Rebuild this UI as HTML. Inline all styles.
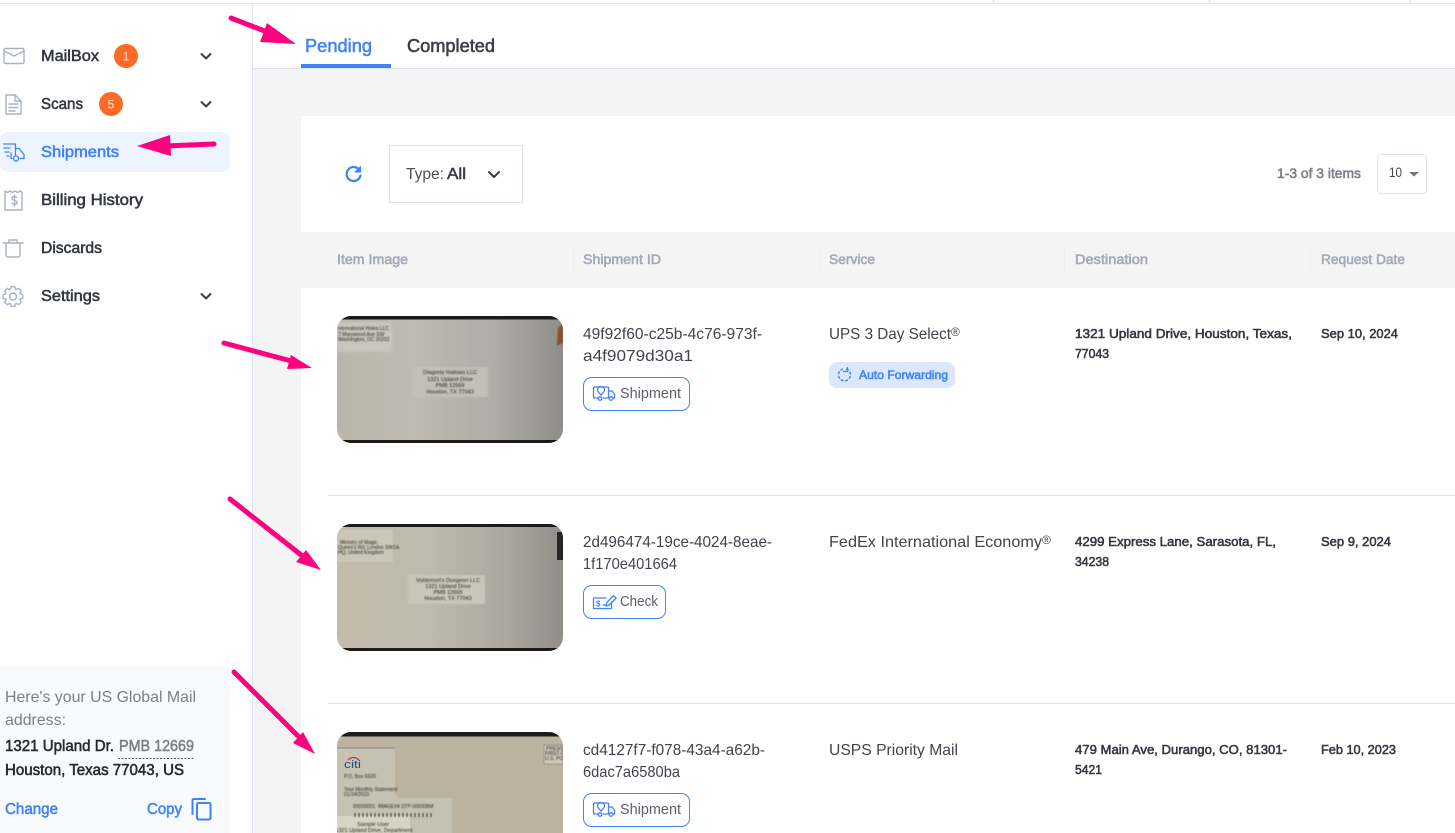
<!DOCTYPE html>
<html lang="en">
<head>
<meta charset="utf-8">
<title>Shipments</title>
<style>
html,body{margin:0;padding:0;width:1455px;height:833px;overflow:hidden;background:#fff}
svg{display:block;position:absolute;left:0;top:0}
text{font-family:"Liberation Sans",sans-serif;white-space:pre}
.m{stroke-width:.55px;paint-order:stroke}
.nav{font-size:16px;fill:#33373f;stroke:#33373f}
.h{font-size:14px;fill:#a2a8b6;stroke:#a2a8b6}
.b{font-size:16px;fill:#40444c;letter-spacing:0}
.d{font-size:13px;fill:#33373f;stroke:#33373f}
.l{font-size:14.5px;fill:#5b5f66}
.i{fill:none;stroke:#a9b2c0;stroke-width:1.4;stroke-linecap:round;stroke-linejoin:round}
.bl{fill:none;stroke:#3f83f8;stroke-width:1.3;stroke-linecap:round;stroke-linejoin:round}
.c{fill:none;stroke:#3a3d44;stroke-width:2;stroke-linecap:round;stroke-linejoin:round}
.e{font-size:5.5px;fill:#2c2a26;text-anchor:middle;filter:url(#bl)}
.e2{font-size:5px;fill:#2c2a26;filter:url(#bl)}
.ar{fill:none;stroke:#ff0080;stroke-width:5;stroke-linecap:round}
</style>
</head>
<body>
<svg width="1455" height="833" viewBox="0 0 1455 833" xmlns="http://www.w3.org/2000/svg">
<defs>
<filter id="bl" x="-10%" y="-30%" width="120%" height="160%"><feGaussianBlur stdDeviation=".45"/></filter>
<filter id="soft" x="-5%" y="-5%" width="110%" height="110%"><feGaussianBlur stdDeviation=".8"/></filter>
<linearGradient id="g1" x1="0" x2="1" y1="0" y2="0"><stop offset="0" stop-color="#b9b6ab"/><stop offset=".35" stop-color="#bdbab1"/><stop offset=".7" stop-color="#aeaca5"/><stop offset="1" stop-color="#8e8d88"/></linearGradient>
<linearGradient id="g2" x1="0" x2="1" y1="0" y2="0"><stop offset="0" stop-color="#c2bbaa"/><stop offset=".4" stop-color="#bfbaae"/><stop offset=".75" stop-color="#aaa79f"/><stop offset="1" stop-color="#908e87"/></linearGradient>
<clipPath id="c1"><rect x="337" y="316" width="226" height="127" rx="14"/></clipPath>
<clipPath id="c2"><rect x="337" y="524" width="226" height="127" rx="14"/></clipPath>
<clipPath id="c3"><rect x="337" y="732" width="226" height="127" rx="14"/></clipPath>
</defs>

<!-- page background -->
<rect width="1455" height="833" fill="#fff"/>
<rect x="253" y="69" width="1202" height="764" fill="#f4f4f4"/>
<rect x="253" y="68" width="1202" height="1" fill="#dde3ef"/>
<rect x="0" y="3" width="1455" height="1" fill="#dfe3ec"/>
<rect x="993" y="0" width="1" height="3" fill="#dfe3ec"/>
<rect x="1209" y="0" width="1" height="3" fill="#dfe3ec"/>
<rect x="1410" y="0" width="1" height="3" fill="#dfe3ec"/>
<rect x="252" y="4" width="1" height="829" fill="#dde3ef"/>

<!-- tabs -->
<text x="305" y="52" font-size="18" fill="#3f83f8" stroke="#3f83f8" class="m" textLength="67" lengthAdjust="spacingAndGlyphs">Pending</text>
<text x="407" y="52" font-size="18" fill="#3a3d44" stroke="#3a3d44" class="m" textLength="88" lengthAdjust="spacingAndGlyphs">Completed</text>
<rect x="301" y="64" width="90" height="4" fill="#3f83f8"/>

<!-- sidebar -->
<rect x="0" y="132" width="230" height="40" rx="8" fill="#eef4ff"/>
<g class="i">
<path d="M4 50.500q0-2 2-2h16q2 0 2 2v11q0 2-2 2H6q-2 0-2-2z"/>
<path d="M4 51l10 5 10-5"/>
<path d="M6 95h9l6 6v13H6z"/>
<path d="M15 95v6h6M9 104h9M9 107.500h9M9 111h6"/>
<path d="M5 191l2.500 1.500 2.500-1.500 2.500 1.500 2.500-1.500 2.500 1.500 2.500-1.500 2 1V210H5z"/>
<path d="M16.500 197.500c-1-1.300-4.500-1.300-4.500 1 0 2.500 5 1.500 5 4 0 2.200-3.700 2.200-5 .8M14.500 195v11"/>
<path d="M3 243h20M9 243v-3h8v3M6 243v12q0 2 2 2h10q2 0 2-2v-12"/>
<path transform="translate(13 296.500)" d="M-2.600-7.140L-1.740-9.850 1.740-9.850 2.600-7.140 3.210-6.890 5.740-8.190 8.190-5.740 6.890-3.210 7.140-2.600 9.850-1.740 9.850 1.740 7.140 2.600 6.890 3.210 8.190 5.740 5.740 8.190 3.210 6.890 2.600 7.140 1.740 9.850-1.740 9.850-2.600 7.140-3.210 6.890-5.740 8.190-8.190 5.740-6.890 3.210-7.140 2.600-9.850 1.740-9.850-1.740-7.140-2.600-6.890-3.210-8.190-5.740-5.740-8.190-3.210-6.890z"/>
<circle cx="13" cy="296.500" r="3.500"/>
</g>
<g class="bl">
<path d="M3.500 144H15.500V155.500M15.500 148.500h3.500l5 6v4h-4M12 158.500h-1V153"/>
<path d="M4 148h6M5 152h4M7 156h2"/>
<circle cx="16" cy="158.500" r="2.500"/>
</g>
<text x="41" y="61" class="nav m" textLength="58" lengthAdjust="spacingAndGlyphs">MailBox</text>
<circle cx="126" cy="56" r="12" fill="#fa6b25"/>
<text x="126" y="60.500" font-size="12" fill="#ffe9dc" text-anchor="middle">1</text>
<text x="41" y="109" class="nav m" textLength="42" lengthAdjust="spacingAndGlyphs">Scans</text>
<circle cx="111" cy="104" r="12" fill="#fa6b25"/>
<text x="111" y="108.500" font-size="12" fill="#ffe9dc" text-anchor="middle">5</text>
<text x="41" y="157" font-size="16" fill="#3f83f8" stroke="#3f83f8" class="m" textLength="78" lengthAdjust="spacingAndGlyphs">Shipments</text>
<text x="41" y="205" class="nav m" textLength="102" lengthAdjust="spacingAndGlyphs">Billing History</text>
<text x="41" y="253" class="nav m" textLength="61" lengthAdjust="spacingAndGlyphs">Discards</text>
<text x="41" y="301" class="nav m" textLength="59" lengthAdjust="spacingAndGlyphs">Settings</text>
<path class="c" d="M201.500 54l4.500 4.500 4.500-4.500M201.500 102l4.500 4.500 4.500-4.500M201.500 294l4.500 4.500 4.500-4.500"/>

<!-- address card -->
<path d="M0 666H220q10 0 10 10V833H0z" fill="#f9fafc"/>
<text x="5" y="702" font-size="16" fill="#7d7f83" textLength="191" lengthAdjust="spacingAndGlyphs">Here's your US Global Mail</text>
<text x="5" y="725" font-size="16" fill="#7d7f83" textLength="61" lengthAdjust="spacingAndGlyphs">address:</text>
<text x="5" y="751" font-size="16" fill="#26282e" stroke="#26282e" class="m" textLength="109" lengthAdjust="spacingAndGlyphs">1321 Upland Dr.</text>
<text x="119" y="751" font-size="16" fill="#7d7f86" stroke="#7d7f86" class="m" textLength="75" lengthAdjust="spacingAndGlyphs">PMB 12669</text>
<path d="M118 758.500h76" stroke="#555" stroke-width="1" stroke-dasharray="2 1.500" fill="none"/>
<text x="5" y="775" font-size="16" fill="#26282e" stroke="#26282e" class="m" textLength="179" lengthAdjust="spacingAndGlyphs">Houston, Texas 77043, US</text>
<text x="5" y="814" font-size="16" fill="#3f83f8" stroke="#3f83f8" class="m" textLength="53" lengthAdjust="spacingAndGlyphs">Change</text>
<text x="147" y="814" font-size="16" fill="#3f83f8" stroke="#3f83f8" class="m" textLength="35" lengthAdjust="spacingAndGlyphs">Copy</text>
<path d="M205 799h-11q-1.500 0-1.500 1.500V814" fill="none" stroke="#3f83f8" stroke-width="2" stroke-linecap="round"/>
<rect x="197" y="803" width="13.500" height="16.500" rx="1.500" fill="none" stroke="#3f83f8" stroke-width="2"/>

<!-- main panel -->
<rect x="301" y="116" width="1154" height="116" fill="#fff"/>
<rect x="301" y="288" width="1154" height="545" fill="#fff"/>
<rect x="328" y="495" width="1127" height="1" fill="#e2e4e9"/>
<rect x="328" y="703" width="1127" height="1" fill="#e2e4e9"/>

<!-- toolbar -->
<path d="M359 169.500a7 7 0 1 0 1.500 6" fill="none" stroke="#3f83f8" stroke-width="2.300" stroke-linecap="round"/>
<path d="M361 165.500v7h-7z" fill="#3f83f8"/>
<rect x="389.500" y="145.500" width="133" height="57" fill="#fff" stroke="#dde3ef"/>
<text x="406" y="179" font-size="16" fill="#4c5058" textLength="38" lengthAdjust="spacingAndGlyphs">Type:</text>
<text x="447" y="179" font-size="16" fill="#3a3d44" stroke="#3a3d44" class="m" textLength="19" lengthAdjust="spacingAndGlyphs">All</text>
<path class="c" d="M489 172l5 5 5-5"/>
<text x="1277" y="178" font-size="14" fill="#7c7f86" stroke="#7c7f86" class="m" textLength="84" lengthAdjust="spacingAndGlyphs">1-3 of 3 items</text>
<rect x="1377.500" y="154.500" width="49" height="39" rx="4" fill="#fff" stroke="#dde3ef"/>
<text x="1389" y="177" font-size="14" fill="#44474e" textLength="13" lengthAdjust="spacingAndGlyphs">10</text>
<path d="M1409 172h10l-5 4.500z" fill="#777"/>

<!-- table head -->
<text x="337" y="264" class="h m" textLength="71" lengthAdjust="spacingAndGlyphs">Item Image</text>
<text x="583" y="264" class="h m" textLength="78" lengthAdjust="spacingAndGlyphs">Shipment ID</text>
<text x="829" y="264" class="h m" textLength="46" lengthAdjust="spacingAndGlyphs">Service</text>
<text x="1075" y="264" class="h m" textLength="73" lengthAdjust="spacingAndGlyphs">Destination</text>
<text x="1321" y="264" class="h m" textLength="84" lengthAdjust="spacingAndGlyphs">Request Date</text>
<path d="M573.500 248v24M819.500 248v24M1064.500 248v24M1310.500 248v24" stroke="#eeeeee" fill="none"/>

<!-- envelope 1 -->
<g clip-path="url(#c1)">
<rect x="337" y="316" width="226" height="127" fill="url(#g1)"/>
<rect x="337" y="316" width="226" height="3.500" fill="#1d1b19"/>
<rect x="337" y="440" width="226" height="3" fill="#1d1b19"/>
<rect x="337" y="322" width="55" height="30" fill="#c8c5bb" filter="url(#soft)"/>
<rect x="412" y="367" width="76" height="30" fill="#c2bfb6" filter="url(#soft)"/>
<text class="e2" x="338" y="330">nternational Holes LLC</text>
<text class="e2" x="338" y="336">7 Marywood Ave SW</text>
<text class="e2" x="338" y="341">Washington, DC 20202</text>
<text class="e" x="450" y="374">Diagonly Hallows LLC</text>
<text class="e" x="450" y="381">1321 Upland Drive</text>
<text class="e" x="450" y="387">PMB 12669</text>
<text class="e" x="450" y="393.500">Houston, TX 77043</text>
<path d="M558 328l5-5v20l-6 3z" fill="#8a5036" filter="url(#bl)"/>
</g>

<!-- envelope 2 -->
<g clip-path="url(#c2)">
<rect x="337" y="524" width="226" height="127" fill="url(#g2)"/>
<rect x="337" y="524" width="226" height="3" fill="#1d1b19"/>
<rect x="337" y="648" width="226" height="3" fill="#1d1b19"/>
<rect x="337" y="530" width="56" height="32" fill="#cbc6b8" filter="url(#soft)"/>
<rect x="408" y="575" width="77" height="29" fill="#c9c5b9" filter="url(#soft)"/>
<rect x="557" y="532" width="6" height="28" fill="#26262a"/>
<text class="e2" x="340" y="544">Ministry of Magic</text>
<text class="e2" x="338" y="549">Queen's Rd, London SW1A</text>
<text class="e2" x="338" y="554">HQ, United Kingdom</text>
<text class="e" x="448" y="582">Voldemort's Dungeon LLC</text>
<text class="e" x="448" y="588">1321 Upland Drive</text>
<text class="e" x="448" y="594">PMB 12669</text>
<text class="e" x="448" y="600">Houston, TX 77043</text>
</g>

<!-- envelope 3 -->
<g clip-path="url(#c3)">
<rect x="337" y="732" width="226" height="127" fill="#bcb39e"/>
<rect x="337" y="732" width="226" height="4.500" fill="#1e1c19"/>
<path d="M337 748H395V790q0 8 8 8H452V833H337z" fill="#c5c1b3"/>
<path d="M337 748H395" stroke="#77736a" stroke-width=".8"/>
<rect x="544" y="745" width="19" height="19" fill="#cdc7b6" stroke="#777" stroke-width=".5"/>
<rect x="337" y="816" width="73" height="17" fill="#d8d3c5"/>
<path d="M348 760q5.500-5 11 0" stroke="#c0392b" stroke-width="1.200" fill="none"/>
<text x="344" y="768" font-size="11" fill="#2a4a80" textLength="17" lengthAdjust="spacingAndGlyphs">citi</text>
<text class="e2" x="344" y="778">P.O. Box 6500</text>
<text class="e2" x="344" y="791">Your Monthly Statement</text>
<text class="e2" x="344" y="796">01/24/2023</text>
<text class="e2" x="353" y="808">00000001  IMAGE#4 STP 00000BM</text>
<path d="M355 813v4M359 813v4M363 813v4M367 813v4M371 813v4M375 813v4M379 813v4M383 813v4M387 813v4M391 813v4M395 813v4M399 813v4M403 813v4M407 813v4M411 813v4M415 813v4M419 813v4M423 813v4M427 813v4M431 813v4" stroke="#33302a" stroke-width="1" filter="url(#bl)"/>
<text class="e" x="373" y="826">Sample User</text>
<text class="e" x="374" y="832">1321 Upland Drive, Department</text>
<text class="e2" x="546" y="750">PRESORT</text>
<text class="e2" x="545" y="755">FIRST-CLASS</text>
<text class="e2" x="545" y="760">U.S. POSTAGE</text>
</g>

<!-- row 1 -->
<text x="583" y="339" class="b" textLength="179" lengthAdjust="spacingAndGlyphs">49f92f60-c25b-4c76-973f-</text>
<text x="583" y="361" class="b" textLength="110" lengthAdjust="spacingAndGlyphs">a4f9079d30a1</text>
<rect x="583.500" y="377.500" width="106" height="33" rx="8" fill="#fff" stroke="#3f83f8"/>
<g class="bl" stroke-width="1.100">
<path d="M598 398h-3.500q-1 0-1-1v-9q0-1 1-1h13q1 0 1 1v10h-5M609 391h3l2.500 3v4h-1.500"/>
<circle cx="600" cy="398.500" r="1.800"/><circle cx="611" cy="398.500" r="1.800"/>
<path d="M601 395c-2-2-3.500-3.500-3.500-5a3.500 3.500 0 0 1 7 0c0 1.500-1.500 3-3.500 5z"/>
</g>
<text x="620" y="398" class="l" textLength="61" lengthAdjust="spacingAndGlyphs">Shipment</text>
<text x="829" y="339" class="b" textLength="122" lengthAdjust="spacingAndGlyphs">UPS 3 Day Select</text>
<text x="951" y="336" font-size="12" fill="#40444c">®</text>
<rect x="829" y="362" width="126" height="26" rx="8" fill="#dbe7fb"/>
<path d="M846 369a6 6 0 1 1-3 0" fill="none" stroke="#3f83f8" stroke-width="1.400" stroke-dasharray="3 1.500"/>
<path d="M847.500 367v4.500H843" fill="none" stroke="#3f83f8" stroke-width="1.300"/>
<text x="859" y="379" font-size="12" fill="#3f83f8" stroke="#3f83f8" class="m" textLength="89" lengthAdjust="spacingAndGlyphs">Auto Forwarding</text>
<text x="1075" y="338" class="d m" textLength="217" lengthAdjust="spacingAndGlyphs">1321 Upland Drive, Houston, Texas,</text>
<text x="1075" y="358" class="d m" textLength="34" lengthAdjust="spacingAndGlyphs">77043</text>
<text x="1321" y="338" class="d m" textLength="77" lengthAdjust="spacingAndGlyphs">Sep 10, 2024</text>

<!-- row 2 -->
<text x="583" y="547" class="b" textLength="189" lengthAdjust="spacingAndGlyphs">2d496474-19ce-4024-8eae-</text>
<text x="583" y="569" class="b" textLength="94" lengthAdjust="spacingAndGlyphs">1f170e401664</text>
<rect x="583.500" y="585.500" width="82" height="33" rx="8" fill="#fff" stroke="#3f83f8"/>
<g class="bl" stroke-width="1.100">
<path d="M606 598h-12.500v10.500h18v-6.500"/>
<path d="M603 605h3"/>
<path d="M606 606l1-3.500 6.500-7 2.500 2.500-6.500 7z"/>
</g>
<text x="596" y="606.500" font-size="8" fill="#3f83f8" font-weight="bold">$</text>
<text x="620" y="606" class="l" textLength="38" lengthAdjust="spacingAndGlyphs">Check</text>
<text x="829" y="547" class="b" textLength="213" lengthAdjust="spacingAndGlyphs">FedEx International Economy</text>
<text x="1042" y="544" font-size="12" fill="#40444c">®</text>
<text x="1075" y="546" class="d m" textLength="201" lengthAdjust="spacingAndGlyphs">4299 Express Lane, Sarasota, FL,</text>
<text x="1075" y="566" class="d m" textLength="34" lengthAdjust="spacingAndGlyphs">34238</text>
<text x="1321" y="546" class="d m" textLength="70" lengthAdjust="spacingAndGlyphs">Sep 9, 2024</text>

<!-- row 3 -->
<text x="583" y="755" class="b" textLength="182" lengthAdjust="spacingAndGlyphs">cd4127f7-f078-43a4-a62b-</text>
<text x="583" y="777" class="b" textLength="97" lengthAdjust="spacingAndGlyphs">6dac7a6580ba</text>
<rect x="583.500" y="793.500" width="106" height="33" rx="8" fill="#fff" stroke="#3f83f8"/>
<g class="bl" stroke-width="1.100">
<path d="M598 814h-3.500q-1 0-1-1v-9q0-1 1-1h13q1 0 1 1v10h-5M609 807h3l2.500 3v4h-1.500"/>
<circle cx="600" cy="814.500" r="1.800"/><circle cx="611" cy="814.500" r="1.800"/>
<path d="M601 811c-2-2-3.500-3.500-3.500-5a3.500 3.500 0 0 1 7 0c0 1.500-1.500 3-3.500 5z"/>
</g>
<text x="620" y="814" class="l" textLength="61" lengthAdjust="spacingAndGlyphs">Shipment</text>
<text x="829" y="755" class="b" textLength="129" lengthAdjust="spacingAndGlyphs">USPS Priority Mail</text>
<text x="1075" y="754" class="d m" textLength="212" lengthAdjust="spacingAndGlyphs">479 Main Ave, Durango, CO, 81301-</text>
<text x="1075" y="774" class="d m" textLength="27" lengthAdjust="spacingAndGlyphs">5421</text>
<text x="1321" y="754" class="d m" textLength="75" lengthAdjust="spacingAndGlyphs">Feb 10, 2023</text>

<!-- annotation arrows -->
<path class="ar" d="M231 18L275 35"/>
<path d="M267 23L296 44 260 42z" fill="#ff0080"/>
<path class="ar" d="M214 144L165 146"/>
<path d="M170 135L137 146 171 156z" fill="#ff0080"/>
<path class="ar" d="M224 343L295 362"/>
<path d="M291 355L312 368 287 369z" fill="#ff0080"/>
<path class="ar" d="M230 499L305 558"/>
<path d="M306 550L321 570 296 562z" fill="#ff0080"/>
<path class="ar" d="M234 672L300 738"/>
<path d="M303 732L315 754 293 743z" fill="#ff0080"/>
</svg>
</body>
</html>
